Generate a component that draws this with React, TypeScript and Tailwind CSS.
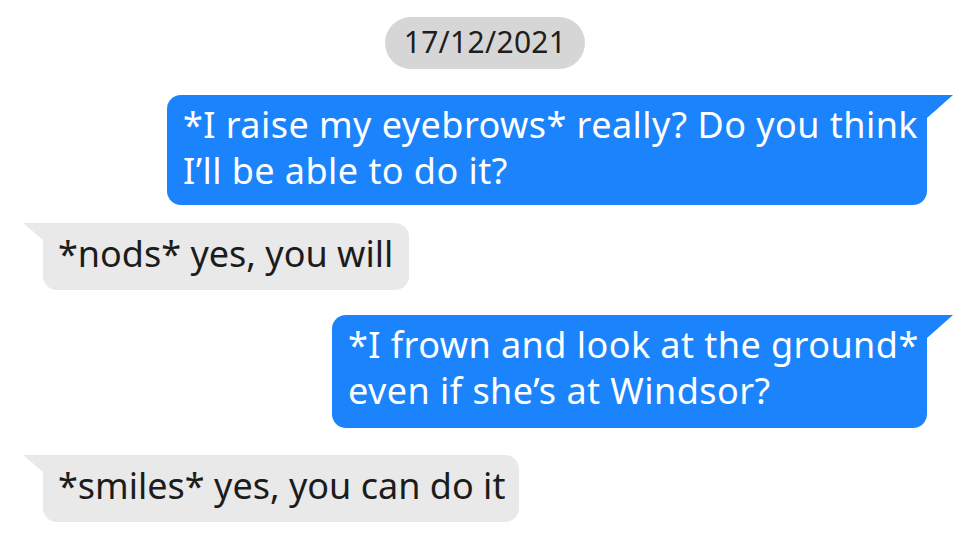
const font = { fontFamily: '"Noto Sans", "Open Sans", sans-serif' };

function Sent({ lines, width, pb }: { lines: string[]; width: string; pb: string }) {
  return (
    <div className="flex justify-end pr-[49px]">
      <div className={`relative ${width} ${pb} rounded-[14px] rounded-tr-none bg-[#1b84fc] pl-4 pt-[7px] text-[36px] leading-[46px] tracking-[0.45px] text-white`}>
        {lines.map((l) => (
          <div key={l} className="whitespace-nowrap">{l}</div>
        ))}
        <span className="absolute left-full top-0 h-[23px] w-[26px] bg-[#1b84fc] [clip-path:polygon(0_0,100%_0,0_100%)]" />
      </div>
    </div>
  );
}

function Received({ text, width }: { text: string; width: string }) {
  return (
    <div className="flex pl-[43px]">
      <div className={`relative ${width} rounded-[14px] rounded-tl-none bg-[#e9e9e9] pl-[15px] pt-[8px] pb-[13px] text-[36px] leading-[46px] tracking-[0px] text-[#1c1c1c]`}>
        <div className="whitespace-nowrap">{text}</div>
        <span className="absolute right-full top-0 h-[17px] w-[20px] bg-[#e9e9e9] [clip-path:polygon(0_0,100%_0,100%_100%)]" />
      </div>
    </div>
  );
}

export default function App() {
  return (
    <div className="h-[549px] w-[976px] overflow-hidden bg-white pt-[17px]" style={font}>
      <div className="flex justify-center pr-[6px]">
        <div className="h-[52px] w-[200px] rounded-full bg-[#d6d6d6] text-center text-[30px] leading-[50px] tracking-[0.3px] text-[#1e1e1e]">
          17/12/2021
        </div>
      </div>
      <div className="mt-[26px]">
        <Sent
          lines={["*I raise my eyebrows* really? Do you think", "I\u2019ll be able to do it?"]}
          width="w-[760px]"
          pb="pb-[11px]"
        />
      </div>
      <div className="mt-[18px]">
        <Received text="*nods* yes, you will" width="w-[366px]" />
      </div>
      <div className="mt-[25px]">
        <Sent
          lines={["*I frown and look at the ground*", "even if she\u2019s at Windsor?"]}
          width="w-[595px]"
          pb="pb-[14px]"
        />
      </div>
      <div className="mt-[27px]">
        <Received text="*smiles* yes, you can do it" width="w-[476px]" />
      </div>
    </div>
  );
}
